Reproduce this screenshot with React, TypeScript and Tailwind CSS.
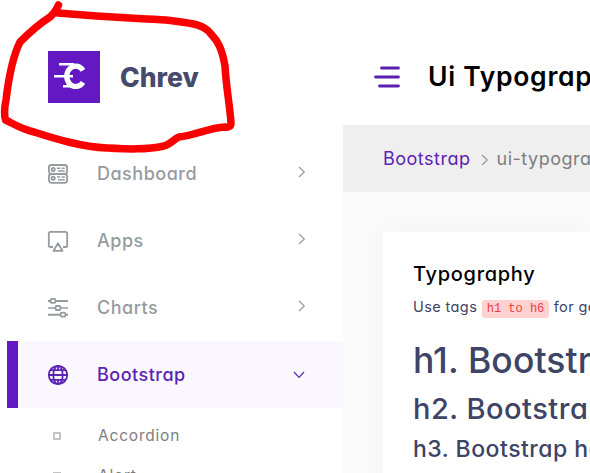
import type { ReactNode } from "react";

function Chevron({ className = "" }: { className?: string }) {
  return (
    <svg className={`shrink-0 ${className}`} width="8" height="12" viewBox="0 0 8 12" fill="none" stroke="currentColor" strokeWidth="1.2">
      <path d="M1 1l5.3 5L1 11" />
    </svg>
  );
}

const iconProps = { width: 22, height: 22, viewBox: "0 0 22 22", fill: "none", stroke: "currentColor", strokeWidth: 1.8 };

const DashboardIcon = () => (
  <svg {...iconProps}>
    <rect x="1.9" y="2" width="18.2" height="8.8" rx="2.5" />
    <rect x="1.9" y="11" width="18.2" height="8.8" rx="2.5" />
    <circle cx="6.2" cy="6.4" r="1.6" />
    <circle cx="6.2" cy="15.3" r="1.6" />
    <path d="M10 5.2h3.2m1.3 0h3.3M11 7.9h6.8M10 14h3.2m1.3 0h3.3M11 16.8h6.8" strokeWidth="1.5" />
  </svg>
);

const AppsIcon = () => (
  <svg {...iconProps}>
    <path d="M6 17H3.4A1.6 1.6 0 0 1 1.8 15.4V3.4A1.6 1.6 0 0 1 3.4 1.8h15.2a1.6 1.6 0 0 1 1.6 1.6V15.4a1.6 1.6 0 0 1-1.6 1.6H16" />
    <path d="M11 13.2l4.500 7.600h-9z" strokeLinejoin="round" />
  </svg>
);

const ChartsIcon = () => (
  <svg {...iconProps}>
    <path d="M1 4h2.5m5 0H21M1 17.700h12m5 0h3" strokeWidth="2" />
    <path d="M1 11h7.5m5 0H21" strokeWidth="1.4" />
    <rect x="3.6" y="1.9" width="4.8" height="4" rx="1.2" />
    <rect x="8.6" y="9" width="4.8" height="4" rx="1" />
    <rect x="13.6" y="15.7" width="4.8" height="4" rx="1.2" />
  </svg>
);

const GlobeIcon = () => (
  <svg {...iconProps}>
    <circle cx="11" cy="11" r="9.2" />
    <ellipse cx="11" cy="11" rx="4.7" ry="9.2" />
    <path d="M1.8 11h18.4M3.2 6.2h15.6M3.2 15.8h15.6M11 1.8v4.4M11 15.8v4.4" />
  </svg>
);

function MenuItem({ icon, children, active = false }: { icon: ReactNode; children: ReactNode; active?: boolean }) {
  return (
    <div className={`flex h-[67px] items-center pr-[37px] font-medium ${active ? "ml-[7px] border-l-[11px] border-[#6418c3] bg-[#faf7fe] pl-[29px] text-[#5c23b5]" : "pl-[47px] text-[#969ba0]"}`}>
      <span className="w-[50px]">{icon}</span>
      <span className="flex-1 whitespace-nowrap text-[18px] tracking-[0.5px]">{children}</span>
      <Chevron className={active ? "mr-[3px] rotate-90" : "-mt-[3px]"} />
    </div>
  );
}

function SubItem({ children }: { children: ReactNode }) {
  return (
    <div className="flex h-10 items-center pl-[53px] text-[15.5px] tracking-[0.8px] text-[#7e7e7e]">
      <span className="h-2 w-2 border-2 border-[#c4c4c4]" />
      <span className="pl-[37px]">{children}</span>
    </div>
  );
}

function Sidebar() {
  return (
    <aside className="h-[473px] w-[343px] shrink-0 overflow-hidden bg-white">
      <div className="flex h-[140px] items-start pl-12 pt-[51px]">
        <svg className="shrink-0" width="52" height="52" viewBox="0 0 52 52" fill="none" stroke="white">
          <rect width="52" height="52" fill="#6418c3" stroke="none" />
          <path d="M35 19.3A9 10.2 0 1 0 35 31.3" strokeWidth="5.2" />
          <path d="M11 13.3h15M6 25.2h19M15 35.2h8" strokeWidth="2.4" />
        </svg>
        <span className="ml-5 mt-2 text-[26.5px] font-extrabold leading-9 text-[#464a6b]">Chrev</span>
      </div>
      <nav>
        <MenuItem icon={<DashboardIcon />}>Dashboard</MenuItem>
        <MenuItem icon={<AppsIcon />}>Apps</MenuItem>
        <MenuItem icon={<ChartsIcon />}>Charts</MenuItem>
        <MenuItem icon={<GlobeIcon />} active>Bootstrap</MenuItem>
        <div className="pt-2">
          <SubItem>Accordion</SubItem>
          <SubItem>Alert</SubItem>
        </div>
      </nav>
    </aside>
  );
}

export default function App() {
  return (
    <div className="relative flex h-[473px] w-[590px] overflow-hidden bg-white font-['Inter',sans-serif] [font-feature-settings:'cv11']">
      <Sidebar />
      <main className="w-[247px] overflow-hidden whitespace-nowrap bg-[#fafafa]">
        <header className="flex h-[125px] items-center bg-white pl-[31px] pt-[28px]">
          <svg className="shrink-0" width="27" height="22" viewBox="0 0 27 22" stroke="#5b1fb0" strokeWidth="2.8" strokeLinecap="round">
            <path d="M7.5 2h17M1.5 11h23M5.5 20h19" />
          </svg>
          <h1 className="ml-[27px] text-[26.5px] font-semibold tracking-[0.7px] text-black">Ui Typography</h1>
        </header>
        <div className="flex h-[67px] items-center bg-[#efefef] pl-10 text-[18px] tracking-[0.5px]">
          <span className="text-[#5c23b5]">Bootstrap</span>
          <Chevron className="ml-[10px] mr-[8px] mt-[3px] text-[#999]" />
          <span className="text-[#7e7e7e]">ui-typography</span>
        </div>
        <div className="pl-10 pt-10">
          <section className="h-[300px] bg-white pl-[30px] pt-[27px] text-[#3d4465] shadow-[0_0_30px_rgba(80,50,100,0.03)]">
            <h4 className="text-[20px] font-medium leading-[30px] tracking-[0.7px] text-black">Typography</h4>
            <p className="mt-[7px] text-[14.5px] leading-[22px]">
              <span className="tracking-[0.4px]">Use tags </span><code className="rounded-[3px] bg-[#ffd1d1] px-[5px] py-[2px] font-['Liberation_Mono',monospace] text-[12px] text-[#ee3c3c]">h1 to h6</code><span className="tracking-[0.4px]"> for get desire heading.</span>
            </p>
            <h1 className="mt-[19px] text-[35.5px] font-medium leading-[44px] tracking-[0.1px]">h1. Bootstrap heading</h1>
            <h2 className="mt-[8px] text-[29px] font-medium leading-[36px] tracking-[0.5px]">h2. Bootstrap heading</h2>
            <h3 className="mt-[8px] text-[23px] font-medium leading-[28px] tracking-[0.5px]">h3. Bootstrap heading</h3>
          </section>
        </div>
      </main>
      <svg className="pointer-events-none absolute left-0 top-0" width="240" height="155" viewBox="0 0 240 155" fill="none" stroke="#fa0000" strokeWidth="7.5" strokeLinecap="round" strokeLinejoin="round">
        <path d="M58.5 5C56 10 55 13 50 17C39 24 29 33 20 42C14 54 9 75 6 100C4 109 4 114 5.5 120C14 124 21 129 34 132C56 139 82 147 107 148C127 149 146 150 164 146C171 144 174 139 179 137C196 135 208 128 225 127Q231 128 231 123C230 107 226 86 225 66C222 49 218 41 211 34C203 23 187 23 166 20C136 18 114 18 58 13" />
      </svg>
    </div>
  );
}
